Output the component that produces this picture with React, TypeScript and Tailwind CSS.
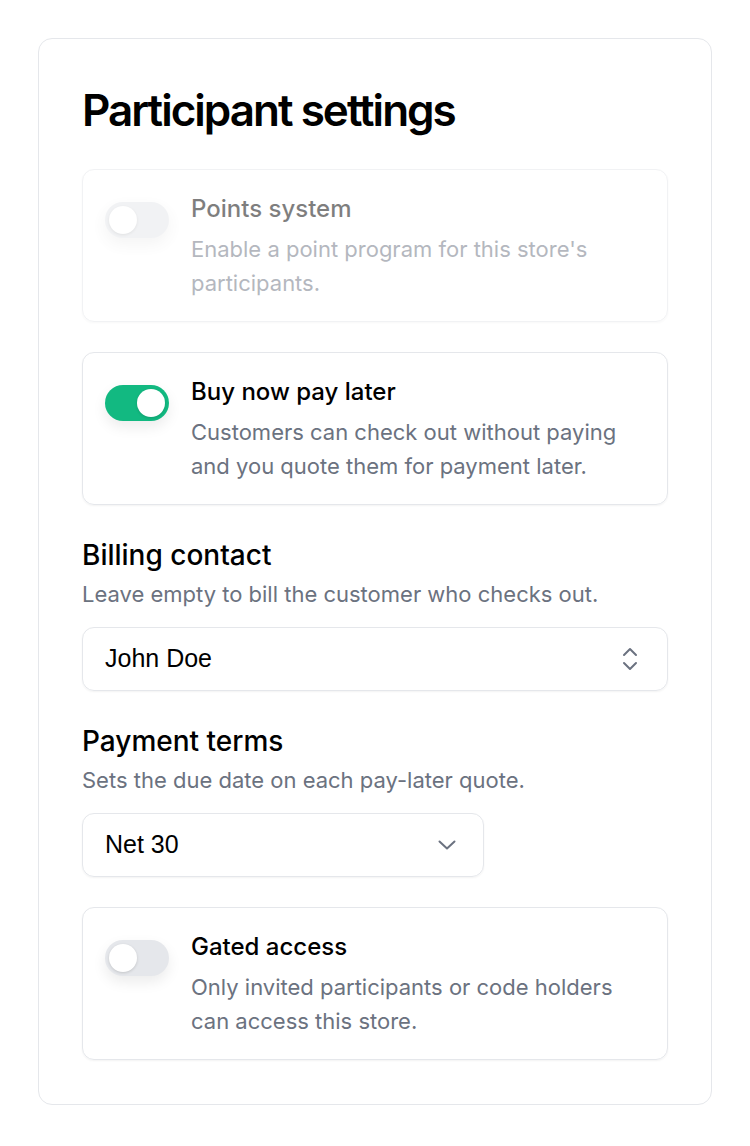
function Toggle({ on }: { on: boolean }) {
  return (
    <div
      className={`mt-[9px] flex h-[36px] w-[64px] shrink-0 items-center rounded-full px-[4px] shadow-[0_6px_14px_rgba(0,0,0,0.08)] ${
        on ? 'justify-end bg-[#12b981]' : 'justify-start bg-[#e5e7eb]'
      }`}
    >
      <div className="h-[28px] w-[28px] rounded-full bg-white shadow-[0_1px_3px_rgba(0,0,0,0.15)]" />
    </div>
  );
}

function SettingCard({ title, desc, on, disabled }: { title: string; desc: string; on: boolean; disabled?: boolean }) {
  return (
    <div
      className={`flex gap-[22px] rounded-[12px] border border-[#e5e7eb] pl-[22px] pr-[28px] pt-[23px] pb-[21px] shadow-[0_1px_2px_rgba(0,0,0,0.05)] ${
        disabled ? 'opacity-50' : ''
      }`}
    >
      <Toggle on={on} />
      <div className="flex flex-col">
        <div className="text-[24px] leading-[32px] font-medium text-black">{title}</div>
        <div className="mt-[7px] text-[22px] leading-[34px] text-[#6b7280]">{desc}</div>
      </div>
    </div>
  );
}

function UpDownIcon() {
  return (
    <svg width="16" height="26" viewBox="0 0 16 26" fill="none" stroke="#6b7280" strokeWidth="2" strokeLinecap="round" strokeLinejoin="round">
      <path d="M2 9 L8 3 L14 9" />
      <path d="M2 17 L8 23 L14 17" />
    </svg>
  );
}

function DownIcon() {
  return (
    <svg width="18" height="10" viewBox="0 0 18 10" fill="none" stroke="#6b7280" strokeWidth="2" strokeLinecap="round" strokeLinejoin="round">
      <path d="M1.5 1.5 L9 8.5 L16.5 1.5" />
    </svg>
  );
}

export default function App() {
  return (
    <div className="min-h-screen bg-white p-[38px]" style={{ fontFamily: 'Inter, "Noto Sans", sans-serif' }}>
      <div className="w-[674px] rounded-[14px] border border-[#e5e7eb] px-[43px] pt-[44px] pb-[44px]">
        <h1 className="text-[44px] leading-[54px] font-semibold tracking-[-0.045em] text-black">Participant settings</h1>

        <div className="mt-[32px] flex flex-col gap-[30px]">
          <SettingCard
            title="Points system"
            desc="Enable a point program for this store's participants."
            on={false}
            disabled
          />
          <SettingCard
            title="Buy now pay later"
            desc="Customers can check out without paying and you quote them for payment later."
            on
          />
        </div>

        <div className="mt-[33px]">
          <div className="text-[28px] leading-[34px] font-medium text-black">Billing contact</div>
          <div className="mt-[7px] text-[22px] leading-[30px] text-[#6b7280]">Leave empty to bill the customer who checks out.</div>
          <div className="mt-[18px] flex h-[64px] items-center justify-between rounded-[12px] border border-[#e5e7eb] pr-[29px] pl-[22px] shadow-[0_1px_2px_rgba(0,0,0,0.05)]">
            <span className="text-[25px] text-black" style={{ fontFamily: '"Liberation Sans", Arial, sans-serif' }}>John Doe</span>
            <UpDownIcon />
          </div>
        </div>

        <div className="mt-[33px]">
          <div className="text-[28px] leading-[34px] font-medium text-black">Payment terms</div>
          <div className="mt-[7px] text-[22px] leading-[30px] text-[#6b7280]">Sets the due date on each pay-later quote.</div>
          <div className="mt-[18px] flex h-[64px] w-[402px] items-center justify-between rounded-[12px] border border-[#e5e7eb] pr-[27px] pl-[22px] shadow-[0_1px_2px_rgba(0,0,0,0.05)]">
            <span className="text-[25px] text-black" style={{ fontFamily: '"Liberation Sans", Arial, sans-serif' }}>Net 30</span>
            <DownIcon />
          </div>
        </div>

        <div className="mt-[30px]">
          <SettingCard
            title="Gated access"
            desc="Only invited participants or code holders can access this store."
            on={false}
          />
        </div>
      </div>
    </div>
  );
}
